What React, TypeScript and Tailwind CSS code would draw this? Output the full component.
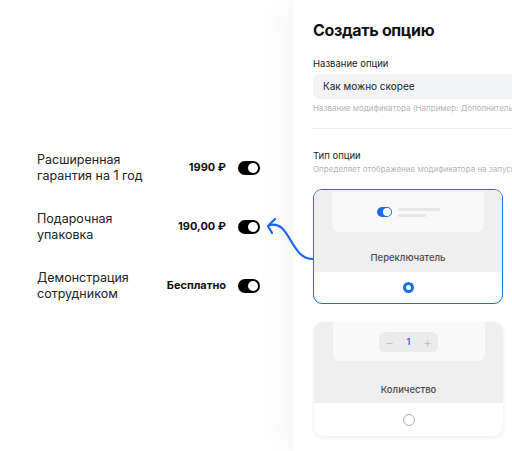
import React from "react";

const rows = [
  { title: ["Расширенная", "гарантия на 1 год"], price: "1990 ₽" },
  { title: ["Подарочная", "упаковка"], price: "190,00 ₽" },
  { title: ["Демонстрация", "сотрудником"], price: "Бесплатно" },
];

function BlackToggle() {
  return (
    <div className="flex h-[14px] w-[22px] shrink-0 items-center justify-end rounded-full bg-black pr-[2px]">
      <div className="h-[10px] w-[10px] rounded-full bg-white" />
    </div>
  );
}

function OptionRow({ title, price }: { title: string[]; price: string }) {
  return (
    <div className="flex items-center">
      <div className="text-[12.5px] leading-[16px] text-[#222]">
        {title.map((line) => (
          <div key={line}>{line}</div>
        ))}
      </div>
      <div className="ml-auto mr-3 text-[11px] font-bold text-[#111]">{price}</div>
      <BlackToggle />
    </div>
  );
}

function Arrow() {
  return (
    <svg className="pointer-events-none absolute inset-0 z-20" width="512" height="451" viewBox="0 0 512 451" fill="none">
      <path
        d="M313 259 C 302 259, 297 251, 291 241 C 285 231, 281 223, 270 225"
        stroke="#1565f2"
        strokeWidth="2.2"
        strokeLinecap="round"
      />
      <path d="M275 219 L 268 226 L 272 233" stroke="#1565f2" strokeWidth="2.2" strokeLinecap="round" strokeLinejoin="round" />
    </svg>
  );
}

export default function App() {
  return (
    <div className="relative flex h-[451px] w-[512px] overflow-hidden bg-white" style={{ fontFamily: "Inter, 'Noto Sans', sans-serif" }}>
      <div className="flex w-[293px] shrink-0 flex-col justify-center gap-[27px] pl-[37px] pr-[33px] pt-[2px]">
        {rows.map((r) => (
          <OptionRow key={r.price} title={r.title} price={r.price} />
        ))}
      </div>

      <div className="relative z-10 w-[260px] shrink-0 bg-white pl-5 pt-[19px] shadow-[-14px_0_28px_rgba(0,0,0,0.035)]">
        <h1 className="text-[16px] font-bold leading-[22px] tracking-[-0.02em] text-[#111]">Создать опцию</h1>

        <div className="mt-[16px] text-[9.5px] leading-[13px] text-[#222]">Название опции</div>
        <div className="mt-[4px] flex h-[25px] items-center rounded-md bg-[#f2f3f5] pl-[10px] text-[10px] text-[#222]">
          Как можно скорее
        </div>
        <div className="mt-[4px] overflow-hidden whitespace-nowrap text-[8px] leading-[11px] text-[#b5b5b5]">
          Название модификатора (Например: Дополнительный соус)
        </div>
        <div className="mt-[14px] h-px bg-[#ececec]" />

        <div className="mt-[20px] text-[9.5px] leading-[13px] text-[#222]">Тип опции</div>
        <div className="mt-[2px] overflow-hidden whitespace-nowrap text-[8px] leading-[11px] text-[#b5b5b5]">
          Определяет отображение модификатора на запуске
        </div>

        <div className="mt-[14px] w-[190px] overflow-hidden rounded-[9px] border-[1.5px] border-[#1a6cf0] bg-white">
          <div className="flex h-[82px] flex-col items-center bg-[#efefef] pt-[2px]">
            <div className="flex h-[40px] w-[152px] items-center justify-center gap-[6px] rounded-b-[7px] bg-[#f9f9f9]">
              <div className="flex h-[10px] w-[15px] items-center justify-end rounded-full bg-[#1a6cf0] pr-[1px]">
                <div className="h-[8px] w-[8px] rounded-full bg-white" />
              </div>
              <div className="flex flex-col gap-[3px]">
                <div className="h-[3px] w-[42px] rounded-full bg-[#e6e6e6]" />
                <div className="h-[3px] w-[28px] rounded-full bg-[#e6e6e6]" />
              </div>
            </div>
            <div className="mt-[19px] text-[9.5px] font-medium text-[#4a4a4a]">Переключатель</div>
          </div>
          <div className="flex h-[31px] items-center justify-center">
            <div className="h-[11px] w-[11px] rounded-full border-[3px] border-[#1a6cf0] bg-white" />
          </div>
        </div>

        <div className="ml-px mt-[18px] w-[189px] overflow-hidden rounded-[9px] bg-white shadow-[0_1px_4px_rgba(0,0,0,0.08)]">
          <div className="flex h-[81px] flex-col items-center bg-[#efefef]">
            <div className="flex h-[39px] w-[152px] items-center justify-center rounded-b-[7px] bg-[#f9f9f9]">
              <div className="flex h-[20px] w-[59px] items-center justify-between rounded-md bg-[#ececec] px-[6px] text-[14px] font-extralight text-[#aaa]">
                <span>−</span>
                <span className="text-[9px] font-semibold text-[#1a6cf0]">1</span>
                <span>+</span>
              </div>
            </div>
            <div className="mt-[22px] text-[9.5px] font-medium text-[#4a4a4a]">Количество</div>
          </div>
          <div className="flex h-[33px] items-center justify-center">
            <div className="h-[12px] w-[12px] rounded-full border border-[#aaa] bg-white" />
          </div>
        </div>
      </div>

      <Arrow />
    </div>
  );
}
